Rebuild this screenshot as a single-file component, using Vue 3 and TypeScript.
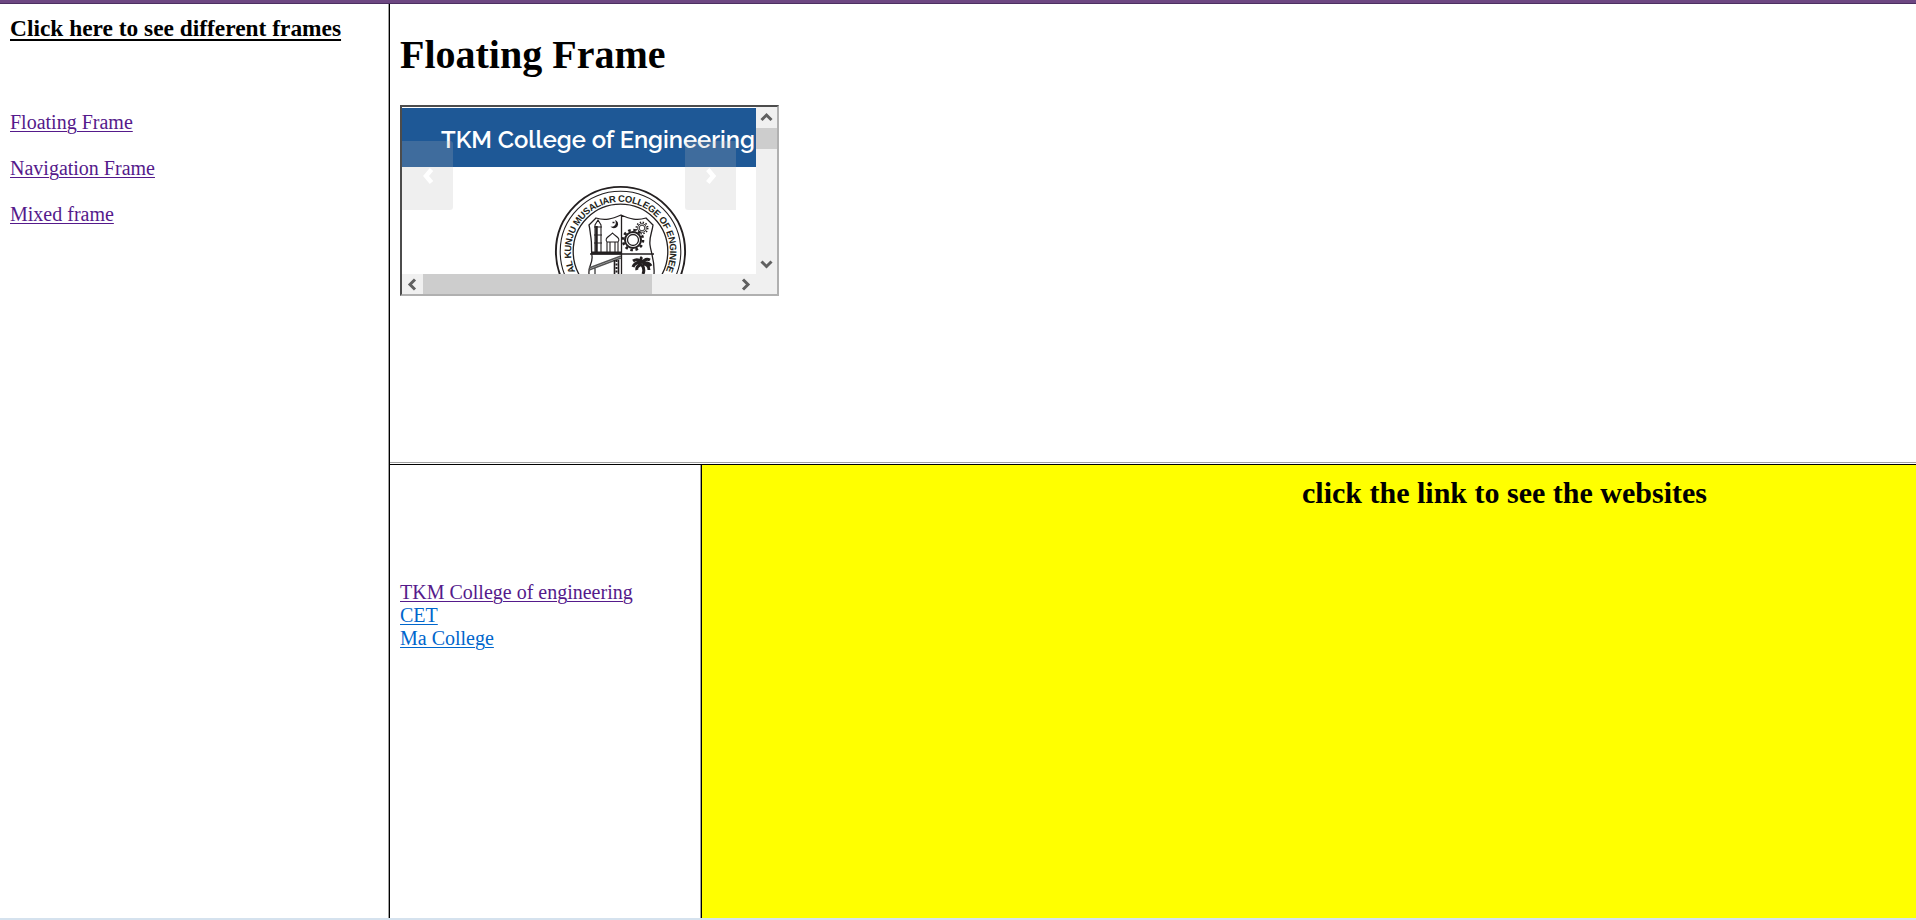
<script setup lang="ts">
interface FrameLink { label: string; visited: boolean }

const frames: FrameLink[] = [
  { label: 'Floating Frame', visited: true },
  { label: 'Navigation Frame', visited: true },
  { label: 'Mixed frame', visited: true },
]
const colleges: FrameLink[] = [
  { label: 'TKM College of engineering', visited: true },
  { label: 'CET', visited: false },
  { label: 'Ma College', visited: false },
]
</script>

<template>
  <div class="window">
    <div class="topbar"></div>
    <div class="frameset">
      <nav class="sidebar">
        <h3><u>Click here to see different frames</u></h3>
        <a v-for="f in frames" :key="f.label" class="link" :class="{ visited: f.visited }">{{ f.label }}</a>
      </nav>
      <div class="main">
        <section class="floating">
          <h1>Floating Frame</h1>
          <div class="iframe">
            <div class="viewport">
              <svg width="354" height="167" viewBox="402 107 354 167">
                <rect x="402" y="108" width="354" height="59" fill="#1e5896" />
                <text class="brand" x="441" y="148" textLength="314" lengthAdjust="spacingAndGlyphs">TKM College of Engineering</text>
                <path d="M402 141h48a3 3 0 0 1 3 3v63a3 3 0 0 1-3 3h-48z" fill="#b6b6b6" fill-opacity=".22" />
                <path d="M736 141h-48a3 3 0 0 0-3 3v63a3 3 0 0 0 3 3h48z" fill="#b6b6b6" fill-opacity=".22" />
                <path d="M431.500 169.500l-5.500 6.500 5.500 6.500M707.800 169.500l5.500 6.500-5.500 6.500" fill="none" stroke="#fff" stroke-width="4.500" />
                <g fill="none" stroke="#231f20">
                  <circle cx="620.500" cy="251.500" r="64.600" stroke-width="1.900" />
                  <circle cx="620.500" cy="251.500" r="60.300" stroke-width="1.100" />
                  <circle cx="620.500" cy="251.500" r="47.300" stroke-width="1.300" />
                </g>
                <path id="ring" d="M575.300 271.600A49.500 49.500 0 1 1 665.700 271.600" fill="none" />
                <text class="ring-text"><textPath href="#ring" textLength="196">AL KUNJU MUSALIAR COLLEGE OF ENGINEE</textPath></text>
                <g fill="none" stroke="#231f20" stroke-width="1.300">
                  <path d="M589 274c-1-8 4-11 3-18s0-12-1-18-1-9-2-13l7-7c9 3 16 1 25-3 9 4 16 6 25 3l7 7c-1 8-4 12-3 20s5 16 4 29M621.500 215v59M590 254h64" />
                  <path d="M592 253h29" stroke-width="3" />
                  <path d="M589 268l32-12M589 270l32-12M595 268v6" stroke="#555" stroke-width="1.500" />
                  <path d="M614.500 260v14M618.500 260v14" stroke-width="1.600" />
                  <path d="M616.500 260v14" stroke-dasharray="2 1.500" stroke-width="2" />
                  <circle cx="633" cy="240" r="5.500" />
                  <circle cx="633" cy="240" r="8" stroke-width="2" />
                  <circle cx="633" cy="240" r="10" stroke-width="2.600" stroke-dasharray="2.600 2.636" />
                  <circle cx="642" cy="228" r="2.800" stroke-width=".9" />
                  <circle cx="642" cy="228" r="4.300" stroke-width=".9" />
                  <circle cx="642" cy="228" r="5.700" stroke-width="1.600" stroke-dasharray="1.400 1.584" />
                  <path d="M595 253v-28l3-5 3 5v28M594 227h8M594 235h8M594 243h8M607 252v-10h11v10M610 242v10M615 242v10M607 242c-3-4 2-5 5.500-9 3.500 4 8.500 5 5.500 9z" stroke-width="1.100" />
                  <path d="M596.500 226v27" stroke-width="2.500" />
                  <path d="M615 220a4.200 4.200 0 1 1-4.500 6.500c4.500 1 6.500-3 4.500-6.500z" fill="#231f20" stroke="none" />
                  <path d="M612.500 222.500h2" stroke-width="1.500" />
                  <path d="M642 263c-3-4-6-4-9-2M642 263c-6-1-8 1-9 4M642 264c-4 2-6 3-5 6M642 263c-2-4-1-5 0-6M642 263c3-5 6-4 8-3M642 263c5-1 8 1 9 3M643 264c4 0 6 3 6 6M642 265q3 4 1 9" stroke-width="3" />
                </g>
              </svg>
            </div>
            <div class="vscroll">
              <svg width="21" height="21" viewBox="0 0 21 21"><path d="M5.500 13l5-5 5 5" /></svg>
              <div class="vthumb"></div>
              <svg class="down" width="21" height="21" viewBox="0 0 21 21"><path d="M5.500 8.500l5 5 5-5" /></svg>
            </div>
            <div class="hscroll">
              <svg width="21" height="20" viewBox="0 0 21 20"><path d="M13 5.500l-5 5 5 5" /></svg>
              <div class="hthumb"></div>
              <svg class="right" width="21" height="20" viewBox="0 0 21 20"><path d="M8 5.500l5 5-5 5" /></svg>
            </div>
            <div class="corner"></div>
          </div>
        </section>
        <div class="lower">
          <nav class="colleges">
            <a v-for="c in colleges" :key="c.label" class="link" :class="{ visited: c.visited }">{{ c.label }}</a>
          </nav>
          <section class="websites"><h2>click the link to see the websites</h2></section>
        </div>
      </div>
    </div>
    <div class="statusbar"></div>
  </div>
</template>

<style>
body { margin: 0; background: #fff; }
</style>

<style scoped>
.window { display: flex; flex-direction: column; height: 920px; font: 20px/22px "Liberation Serif", "Times New Roman", serif; color: #000; }
.topbar { box-sizing: border-box; height: 4px; background: #6d4782; border-bottom: 1px solid #4c2f62; }
.statusbar { height: 2px; background: #d5e2ee; }
.frameset { display: flex; height: 914px; }
h1, h2, h3 { margin: 0; white-space: nowrap; }
.sidebar { box-sizing: border-box; width: 389px; padding: 11px 10px; border-right: 1px solid #a0a0a0; }
h3 { font-size: 23.4px; line-height: 26px; margin-bottom: 70px; }
h3 u { text-decoration-thickness: 2px; text-underline-offset: 3px; }
.link { display: block; width: max-content; padding-bottom: 1px; color: #0066cc; text-decoration: underline; text-decoration-thickness: 1px; text-underline-offset: 2px; text-decoration-skip-ink: auto; }
.link.visited { color: #551a8b; }
.sidebar .link { margin-bottom: 23px; }
.main { flex: 1; display: flex; flex-direction: column; border-left: 1px solid #000; }
.floating { box-sizing: border-box; height: 459px; padding: 28px 10px 0; border-bottom: 1px solid #a0a0a0; }
h1 { font-size: 40px; line-height: 45px; margin-bottom: 28px; }
.iframe { display: grid; grid-template: 167px 20px / 354px 21px; width: 375px; border: 2px solid; border-color: #4c4c4c #b0b0b0 #b0b0b0 #4c4c4c; }
.viewport { overflow: hidden; }
.viewport svg { display: block; }
.brand { font: 600 24px Raleway, Lato, sans-serif; fill: #fff; }
.ring-text { font: bold 9.4px "Liberation Sans", Arial, sans-serif; fill: #231f20; }
.vscroll, .hscroll { display: flex; background: #f0f0f0; }
.vscroll { flex-direction: column; }
.vscroll svg, .hscroll svg { display: block; fill: none; stroke: #606060; stroke-width: 3; }
.vthumb { height: 21px; background: #cdcdcd; }
.hthumb { width: 229px; background: #cdcdcd; }
.down { margin-top: auto; }
.right { margin-left: auto; }
.corner { background: #f0f0f0; }
.lower { flex: 1; display: flex; margin-top: 1px; border-top: 1px solid #000; }
.colleges { box-sizing: border-box; width: 311px; padding: 116px 10px 0; border-right: 1px solid #a0a0a0; }
.websites { flex: 1; border-left: 1px solid #000; background: #ff0; text-align: center; }
h2 { margin-top: 11px; padding-left: 391px; font-size: 30px; line-height: 33px; }
</style>
